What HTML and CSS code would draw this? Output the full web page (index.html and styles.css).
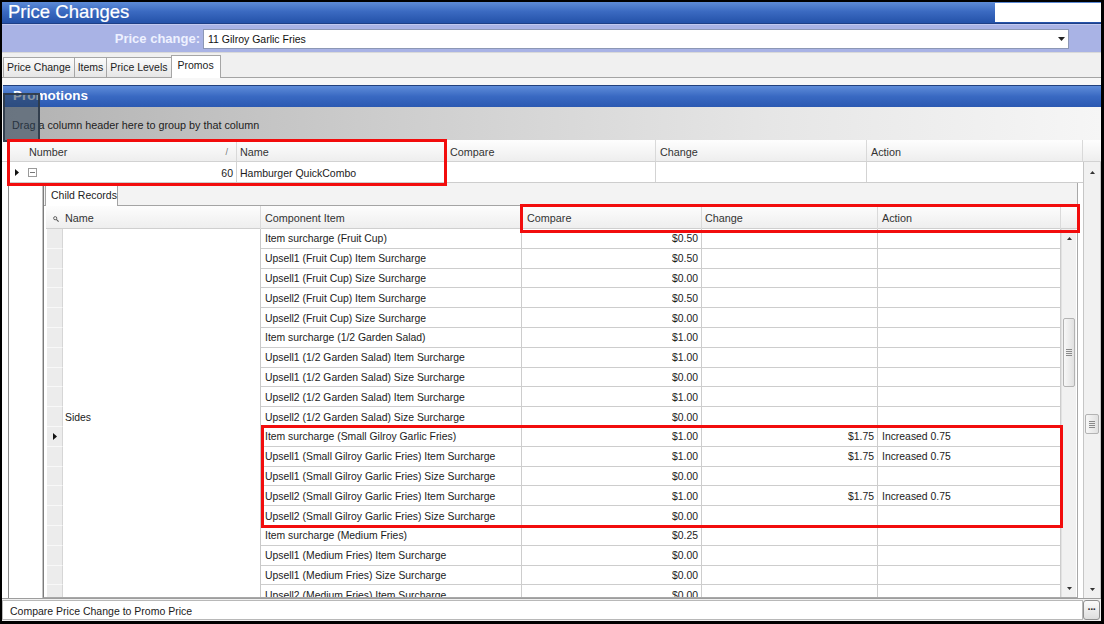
FILE: index.html
```html
<!DOCTYPE html>
<html>
<head>
<meta charset="utf-8">
<title>Price Changes</title>
<link rel="stylesheet" href="styles.css">
</head>
<body>
<div class="window">
  <div class="titlebar">
    <span class="title">Price Changes</span>
    <div class="title-box"></div>
  </div>
  <div class="paramband">
    <span class="param-label">Price change:</span>
    <div class="combo">
      <span class="combo-text">11 Gilroy Garlic Fries</span>
      <span class="combo-arrow"><svg width="7" height="4" viewBox="0 0 7 4"><path d="M0 0h7L3.5 4z" fill="#222"/></svg></span>
    </div>
  </div>
  <div class="tabstrip">
    <div class="tab">Price Change</div>
    <div class="tab">Items</div>
    <div class="tab">Price Levels</div>
    <div class="tab active">Promos</div>
  </div>
  <div class="gap"></div>
  <div class="promo-bar">Promotions</div>
  <div class="group-panel">Drag a column header here to group by that column</div>

  <div class="grid">
    <div class="grid-head">
      <div class="gh-lead"></div>
      <div class="gh-cell gh-ind"></div>
      <div class="gh-cell gh-num">Number<span class="sort">/</span></div>
      <div class="gh-cell gh-name">Name</div>
      <div class="gh-cell gh-cmp">Compare</div>
      <div class="gh-cell gh-chg">Change</div>
      <div class="gh-cell gh-act">Action</div>
      <div class="gh-tail"></div>
    </div>
    <div class="grid-body">
      <div class="gb-lead"></div>
      <div class="grid-main">
        <div class="master-row">
          <div class="m-cell m-ind"><svg width="4" height="7" viewBox="0 0 4 7"><path d="M0 0L4 3.5L0 7z" fill="#111"/></svg></div>
          <div class="m-cell m-num">
            <span class="expander"><span class="minus"></span></span>
            <span class="num-val">60</span>
          </div>
          <div class="m-cell m-name">Hamburger QuickCombo</div>
          <div class="m-cell m-cmp"></div>
          <div class="m-cell m-chg"></div>
          <div class="m-cell m-act"></div>
        </div>
        <div class="detail">
          <div class="detail-gutter"></div>
          <div class="child-panel">
            <div class="child-tabs">
              <div class="child-tab">Child Records</div>
            </div>
            <div class="child-grid">
              <div class="child-head">
                <div class="ch-cell ch-sel"><svg width="6" height="6" viewBox="0 0 6 6"><circle cx="2.2" cy="2.2" r="1.6" fill="none" stroke="#555" stroke-width="0.9"/><path d="M3.3 3.3L5.6 5.6" stroke="#555" stroke-width="1.1"/></svg></div>
                <div class="ch-cell ch-name">Name</div>
                <div class="ch-cell ch-item">Component Item</div>
                <div class="ch-cell ch-cmp">Compare</div>
                <div class="ch-cell ch-chg">Change</div>
                <div class="ch-cell ch-act">Action</div>
                <div class="ch-cell ch-tail"></div>
              </div>
              <div class="child-body">
                <div class="child-rows">
                  <div class="crow"><div class="c-sel"></div><div class="c-name"></div><div class="c-item">Item surcharge (Fruit Cup)</div><div class="c-cmp">$0.50</div><div class="c-chg"></div><div class="c-act"></div></div>
                  <div class="crow"><div class="c-sel"></div><div class="c-name"></div><div class="c-item">Upsell1 (Fruit Cup) Item Surcharge</div><div class="c-cmp">$0.50</div><div class="c-chg"></div><div class="c-act"></div></div>
                  <div class="crow"><div class="c-sel"></div><div class="c-name"></div><div class="c-item">Upsell1 (Fruit Cup) Size Surcharge</div><div class="c-cmp">$0.00</div><div class="c-chg"></div><div class="c-act"></div></div>
                  <div class="crow"><div class="c-sel"></div><div class="c-name"></div><div class="c-item">Upsell2 (Fruit Cup) Item Surcharge</div><div class="c-cmp">$0.50</div><div class="c-chg"></div><div class="c-act"></div></div>
                  <div class="crow"><div class="c-sel"></div><div class="c-name"></div><div class="c-item">Upsell2 (Fruit Cup) Size Surcharge</div><div class="c-cmp">$0.00</div><div class="c-chg"></div><div class="c-act"></div></div>
                  <div class="crow"><div class="c-sel"></div><div class="c-name"></div><div class="c-item">Item surcharge (1/2 Garden Salad)</div><div class="c-cmp">$1.00</div><div class="c-chg"></div><div class="c-act"></div></div>
                  <div class="crow"><div class="c-sel"></div><div class="c-name"></div><div class="c-item">Upsell1 (1/2 Garden Salad) Item Surcharge</div><div class="c-cmp">$1.00</div><div class="c-chg"></div><div class="c-act"></div></div>
                  <div class="crow"><div class="c-sel"></div><div class="c-name"></div><div class="c-item">Upsell1 (1/2 Garden Salad) Size Surcharge</div><div class="c-cmp">$0.00</div><div class="c-chg"></div><div class="c-act"></div></div>
                  <div class="crow"><div class="c-sel"></div><div class="c-name"></div><div class="c-item">Upsell2 (1/2 Garden Salad) Item Surcharge</div><div class="c-cmp">$1.00</div><div class="c-chg"></div><div class="c-act"></div></div>
                  <div class="crow"><div class="c-sel"></div><div class="c-name">Sides</div><div class="c-item">Upsell2 (1/2 Garden Salad) Size Surcharge</div><div class="c-cmp">$0.00</div><div class="c-chg"></div><div class="c-act"></div></div>
                  <div class="crow"><div class="c-sel current"><svg width="4" height="7" viewBox="0 0 4 7"><path d="M0 0L4 3.5L0 7z" fill="#111"/></svg></div><div class="c-name"></div><div class="c-item">Item surcharge (Small Gilroy Garlic Fries)</div><div class="c-cmp">$1.00</div><div class="c-chg">$1.75</div><div class="c-act">Increased 0.75</div></div>
                  <div class="crow"><div class="c-sel"></div><div class="c-name"></div><div class="c-item">Upsell1 (Small Gilroy Garlic Fries) Item Surcharge</div><div class="c-cmp">$1.00</div><div class="c-chg">$1.75</div><div class="c-act">Increased 0.75</div></div>
                  <div class="crow"><div class="c-sel"></div><div class="c-name"></div><div class="c-item">Upsell1 (Small Gilroy Garlic Fries) Size Surcharge</div><div class="c-cmp">$0.00</div><div class="c-chg"></div><div class="c-act"></div></div>
                  <div class="crow"><div class="c-sel"></div><div class="c-name"></div><div class="c-item">Upsell2 (Small Gilroy Garlic Fries) Item Surcharge</div><div class="c-cmp">$1.00</div><div class="c-chg">$1.75</div><div class="c-act">Increased 0.75</div></div>
                  <div class="crow"><div class="c-sel"></div><div class="c-name"></div><div class="c-item">Upsell2 (Small Gilroy Garlic Fries) Size Surcharge</div><div class="c-cmp">$0.00</div><div class="c-chg"></div><div class="c-act"></div></div>
                  <div class="crow"><div class="c-sel"></div><div class="c-name"></div><div class="c-item">Item surcharge (Medium Fries)</div><div class="c-cmp">$0.25</div><div class="c-chg"></div><div class="c-act"></div></div>
                  <div class="crow"><div class="c-sel"></div><div class="c-name"></div><div class="c-item">Upsell1 (Medium Fries) Item Surcharge</div><div class="c-cmp">$0.00</div><div class="c-chg"></div><div class="c-act"></div></div>
                  <div class="crow"><div class="c-sel"></div><div class="c-name"></div><div class="c-item">Upsell1 (Medium Fries) Size Surcharge</div><div class="c-cmp">$0.00</div><div class="c-chg"></div><div class="c-act"></div></div>
                  <div class="crow"><div class="c-sel"></div><div class="c-name"></div><div class="c-item">Upsell2 (Medium Fries) Item Surcharge</div><div class="c-cmp">$0.00</div><div class="c-chg"></div><div class="c-act"></div></div>
                </div>
                <div class="vscroll inner">
                  <div class="sb-btn"><svg width="5" height="3" viewBox="0 0 5 3"><path d="M0 3L2.5 0L5 3z" fill="#333"/></svg></div>
                  <div class="sb-track"><div class="sb-thumb inner-thumb"><span class="grip"></span></div></div>
                  <div class="sb-btn"><svg width="5" height="3" viewBox="0 0 5 3"><path d="M0 0h5L2.5 3z" fill="#333"/></svg></div>
                </div>
              </div>
            </div>
          </div>
          <div class="detail-tail"></div>
        </div>
      </div>
      <div class="vscroll outer">
        <div class="sb-btn tall"><svg width="5" height="3" viewBox="0 0 5 3"><path d="M0 3L2.5 0L5 3z" fill="#333"/></svg></div>
        <div class="sb-track"><div class="sb-thumb outer-thumb"><span class="grip"></span></div></div>
        <div class="sb-btn"><svg width="5" height="3" viewBox="0 0 5 3"><path d="M0 0h5L2.5 3z" fill="#333"/></svg></div>
      </div>
    </div>
  </div>

  <div class="statusbar">
    <div class="status-text">Compare Price Change to Promo Price</div>
    <div class="status-btn">&middot;&middot;&middot;</div>
  </div>

  <div class="drag-ghost"></div>
  <div class="mark mark-master"></div>
  <div class="mark mark-cols"></div>
  <div class="mark mark-rows"></div>
</div>
</body>
</html>
```

FILE: styles.css
```css
* { box-sizing: border-box; }

body {
  margin: 0;
  background: #000;
  font-family: "Liberation Sans", Arial, sans-serif;
  font-size: 11px;
  color: #1b1b1b;
}

.window {
  width: 1104px;
  height: 624px;
  border-style: solid;
  border-color: #000;
  border-width: 2px 3px 3px 2px;
  background: #f0f0f0;
  display: flex;
  flex-direction: column;
  position: relative;
  overflow: hidden;
}

/* ---------- title ---------- */
.titlebar {
  height: 22px;
  flex: none;
  display: flex;
  background: linear-gradient(#5d8bd7, #3b6ac1 45%, #2452a9);
  border-bottom: 1px solid #1e3f86;
}
.title {
  flex: 1;
  color: #fff;
  font-size: 18.5px;
  line-height: 20px;
  padding-left: 6px;
  -webkit-text-stroke: 0.2px #fff;
}
.title-box {
  width: 106px;
  background: #fff;
  margin: 1px 0;
}

/* ---------- parameter band ---------- */
.paramband {
  height: 28px;
  flex: none;
  display: flex;
  align-items: center;
  background: #a9b3e5;
  border-top: 1px solid #c3caf0;
}
.param-label {
  width: 198px;
  text-align: right;
  font-weight: bold;
  font-size: 13px;
  color: #eef1ff;
}
.combo {
  margin-left: 3px;
  width: 866px;
  height: 20px;
  background: #fff;
  border: 1px solid #8c97b5;
  display: flex;
  align-items: center;
  padding-left: 4px;
  font-size: 10.5px;
  color: #111;
}
.combo-arrow {
  margin-left: auto;
  width: 14px;
  display: flex;
  justify-content: center;
  align-items: center;
}

/* ---------- tabs ---------- */
.tabstrip {
  height: 26px;
  flex: none;
  display: flex;
  align-items: flex-end;
  padding-left: 1px;
  background: #f0f0f0;
  border-top: 1px solid #d9d9d9;
  border-bottom: 1px solid #a4a4a4;
}
.tab {
  height: 20px;
  padding: 0 3px;
  margin-right: -1px;
  border: 1px solid #a6a6a6;
  border-bottom: none;
  background: linear-gradient(#fbfbfb, #e6e6e6);
  font-size: 10.5px;
  line-height: 19px;
  color: #222;
}
.tab.active {
  height: 23px;
  padding: 0 6px;
  margin-bottom: -1px;
  background: #fff;
  line-height: 18px;
}

.gap {
  height: 7px;
  flex: none;
  background: #f7f7f7;
}

/* ---------- promotions ---------- */
.promo-bar {
  height: 22px;
  flex: none;
  margin-left: 1px;
  background: linear-gradient(#5e8cd9, #3969c2 50%, #2b59b2);
  border-top: 1px solid #22407c;
  color: #fff;
  font-weight: bold;
  font-size: 13.5px;
  line-height: 20px;
  padding-left: 10px;
}
.group-panel {
  height: 33px;
  flex: none;
  margin-left: 1px;
  display: flex;
  align-items: center;
  padding: 3px 0 0 9px;
  background: linear-gradient(90deg, #b2b2b2, #cdcdcd 35%, #e6e6e6 70%, #f6f6f6);
  font-size: 10.8px;
  color: #222;
}

/* ---------- master grid ---------- */
.grid {
  height: 458px;
  flex: none;
  display: flex;
  flex-direction: column;
  background: #fff;
}
.grid-head {
  height: 22px;
  flex: none;
  display: flex;
  background: linear-gradient(#fefefe, #eeeeee);
  border-bottom: 1px solid #d2d2d2;
}
.gh-lead { width: 6px; background: #fff; }
.gh-cell {
  border-right: 1px solid #d9d9d9;
  padding-left: 4px;
  line-height: 24px;
  font-size: 10.8px;
  color: #333;
}
.gh-ind { width: 17px; padding: 0; border-right: none; }
.gh-num { width: 212px; display: flex; }
.gh-num .sort { margin-left: auto; margin-right: 8px; color: #777; font-size: 9px; }
.gh-name { width: 209px; padding-left: 3px; }
.gh-cmp { width: 210px; }
.gh-chg { width: 211px; }
.gh-act { width: 216px; }
.gh-tail { flex: 1; }

.grid-body {
  flex: 1;
  display: flex;
  min-height: 0;
}
.gb-lead { width: 6px; background: #fff; }
.grid-main {
  width: 1075px;
  display: flex;
  flex-direction: column;
}
.master-row {
  height: 21px;
  flex: none;
  display: flex;
  border-bottom: 1px solid #cdcdcd;
}
.m-cell {
  border-right: 1px solid #d3d3d3;
  display: flex;
  align-items: center;
  padding-top: 1px;
  font-size: 10.5px;
}
.m-ind { width: 17px; justify-content: center; border-right: none; padding-left: 1px; }
.m-num { width: 212px; padding: 1px 3px 0; }
.expander {
  width: 9px;
  height: 9px;
  border: 1px solid #9a9a9a;
  display: flex;
  align-items: center;
  justify-content: center;
}
.minus { width: 5px; height: 1px; background: #777; }
.num-val { margin-left: auto; }
.m-name { width: 209px; padding-left: 3px; }
.m-cmp { width: 210px; }
.m-chg { width: 211px; }
.m-act { width: 216px; border-right: none; }

.detail {
  flex: 1;
  display: flex;
  min-height: 0;
}
.detail-gutter {
  width: 35px;
  border-left: 1px solid #8e8e8e;
  border-right: 1px solid #c4c4c4;
  background: #fff;
}
.detail-tail { flex: 1; background: #fff; }

.child-panel {
  width: 1035px;
  display: flex;
  flex-direction: column;
  border-left: 1px solid #7c7c7c;
  border-right: 1px solid #a8a8a8;
  border-bottom: 1px solid #a8a8a8;
  background: #fff;
}
.child-tabs {
  height: 23px;
  flex: none;
  display: flex;
  align-items: flex-end;
  padding-left: 1px;
  background: #f3f3f3;
  border-bottom: 1px solid #a4a4a4;
}
.child-tab {
  width: 73px;
  height: 21px;
  margin-bottom: -1px;
  border: 1px solid #a4a4a4;
  border-bottom: none;
  background: #fff;
  font-size: 10.5px;
  line-height: 19px;
  padding-left: 5px;
  color: #222;
}
.child-grid {
  flex: 1;
  display: flex;
  flex-direction: column;
  padding-left: 2px;
  min-height: 0;
}
.child-head {
  height: 23px;
  flex: none;
  display: grid;
  grid-template-columns: 17px 198px 261px 180px 176px 183px 15px;
  background: linear-gradient(#fdfdfd, #eeeeee);
  border-bottom: 1px solid #cfcfcf;
}
.ch-cell {
  border-right: 1px solid #dadada;
  padding-left: 4px;
  line-height: 24px;
  font-size: 10.8px;
  color: #333;
}
.ch-sel { padding: 1px 0 0 7px; border-right: none; display: flex; align-items: center; }
.ch-name { padding-left: 2px; }
.ch-cmp { padding-left: 5px; }
.ch-chg { padding-left: 3px; }
.ch-tail { border-right: none; }

.child-body {
  flex: 1;
  display: flex;
  min-height: 0;
}
.child-rows {
  width: 1015px;
  overflow: hidden;
}
.crow {
  height: 19.8px;
  display: grid;
  grid-template-columns: 17px 198px 261px 180px 176px 183px;
  font-size: 10.4px;
  color: #1b1b1b;
}
.crow > div {
  display: flex;
  align-items: center;
  padding-top: 1px;
  white-space: nowrap;
  overflow: hidden;
}
.c-sel {
  background: #ececec;
  border-bottom: 1px solid #f8f8f8;
  border-right: 1px solid #d6d6d6;
  margin-left: 1px;
}
.c-sel.current { justify-content: center; }
.c-name {
  border-right: 1px solid #c9c9c9;
  padding-left: 2px;
}
.c-item, .c-cmp, .c-chg, .c-act {
  border-bottom: 1px solid #cdcdcd;
  border-right: 1px solid #cdcdcd;
}
.c-item { padding-left: 4px; }
.c-cmp, .c-chg { justify-content: flex-end; padding-right: 3px; }
.c-act { padding-left: 4px; }

/* ---------- scrollbars ---------- */
.vscroll {
  display: flex;
  flex-direction: column;
  background: #f1f1f1;
}
.vscroll.inner { width: 15px; border-left: 1px solid #e2e2e2; }
.vscroll.outer {
  width: 18px;
  border-left: 1px solid #c6c6c6;
  border-right: 1px solid #c6c6c6;
}
.sb-btn {
  height: 18px;
  flex: none;
  display: flex;
  align-items: center;
  justify-content: center;
}
.sb-btn.tall { height: 20px; }
.sb-track { flex: 1; }
.sb-thumb {
  margin: 0 1px;
  border: 1px solid #b3b3b3;
  border-radius: 2px;
  background: linear-gradient(90deg, #f7f7f7, #e1e1e1);
  display: flex;
  align-items: center;
  justify-content: center;
}
.inner-thumb { margin-top: 71px; height: 69px; }
.outer-thumb { margin-top: 232px; height: 20px; }
.grip {
  width: 6px;
  height: 7px;
  background: repeating-linear-gradient(#8a8a8a 0 1px, transparent 1px 2px);
}

/* ---------- status ---------- */
.statusbar {
  height: 23px;
  flex: none;
  display: flex;
  padding: 1px 0 1px 0;
  border-top: 1px solid #9d9d9d;
  background: #f0f0f0;
}
.status-text {
  flex: 1;
  background: #fff;
  border: 1px solid #b8b8b8;
  padding-left: 7px;
  font-size: 10.5px;
  line-height: 20px;
  color: #1b1b1b;
}
.status-btn {
  width: 17px;
  margin-right: 1px;
  border: 1px solid #8f8f8f;
  border-radius: 3px;
  background: linear-gradient(#fbfbfb, #dedede);
  font-size: 11px;
  font-weight: bold;
  line-height: 17px;
  text-align: center;
  letter-spacing: -1px;
  color: #333;
}

/* ---------- overlays ---------- */
.drag-ghost {
  position: absolute;
  left: 1px;
  top: 91px;
  width: 37px;
  height: 49px;
  background: rgba(45, 65, 88, 0.55);
  border: 2px solid rgba(45, 58, 72, 0.9);
}
.mark {
  position: absolute;
  border: 3px solid #f20d0d;
  pointer-events: none;
}
.mark-master { left: 5px; top: 137px; width: 440px; height: 47px; }
.mark-cols { left: 518px; top: 202px; width: 560px; height: 29px; }
.mark-rows { left: 259px; top: 423px; width: 802px; height: 103px; }
```
